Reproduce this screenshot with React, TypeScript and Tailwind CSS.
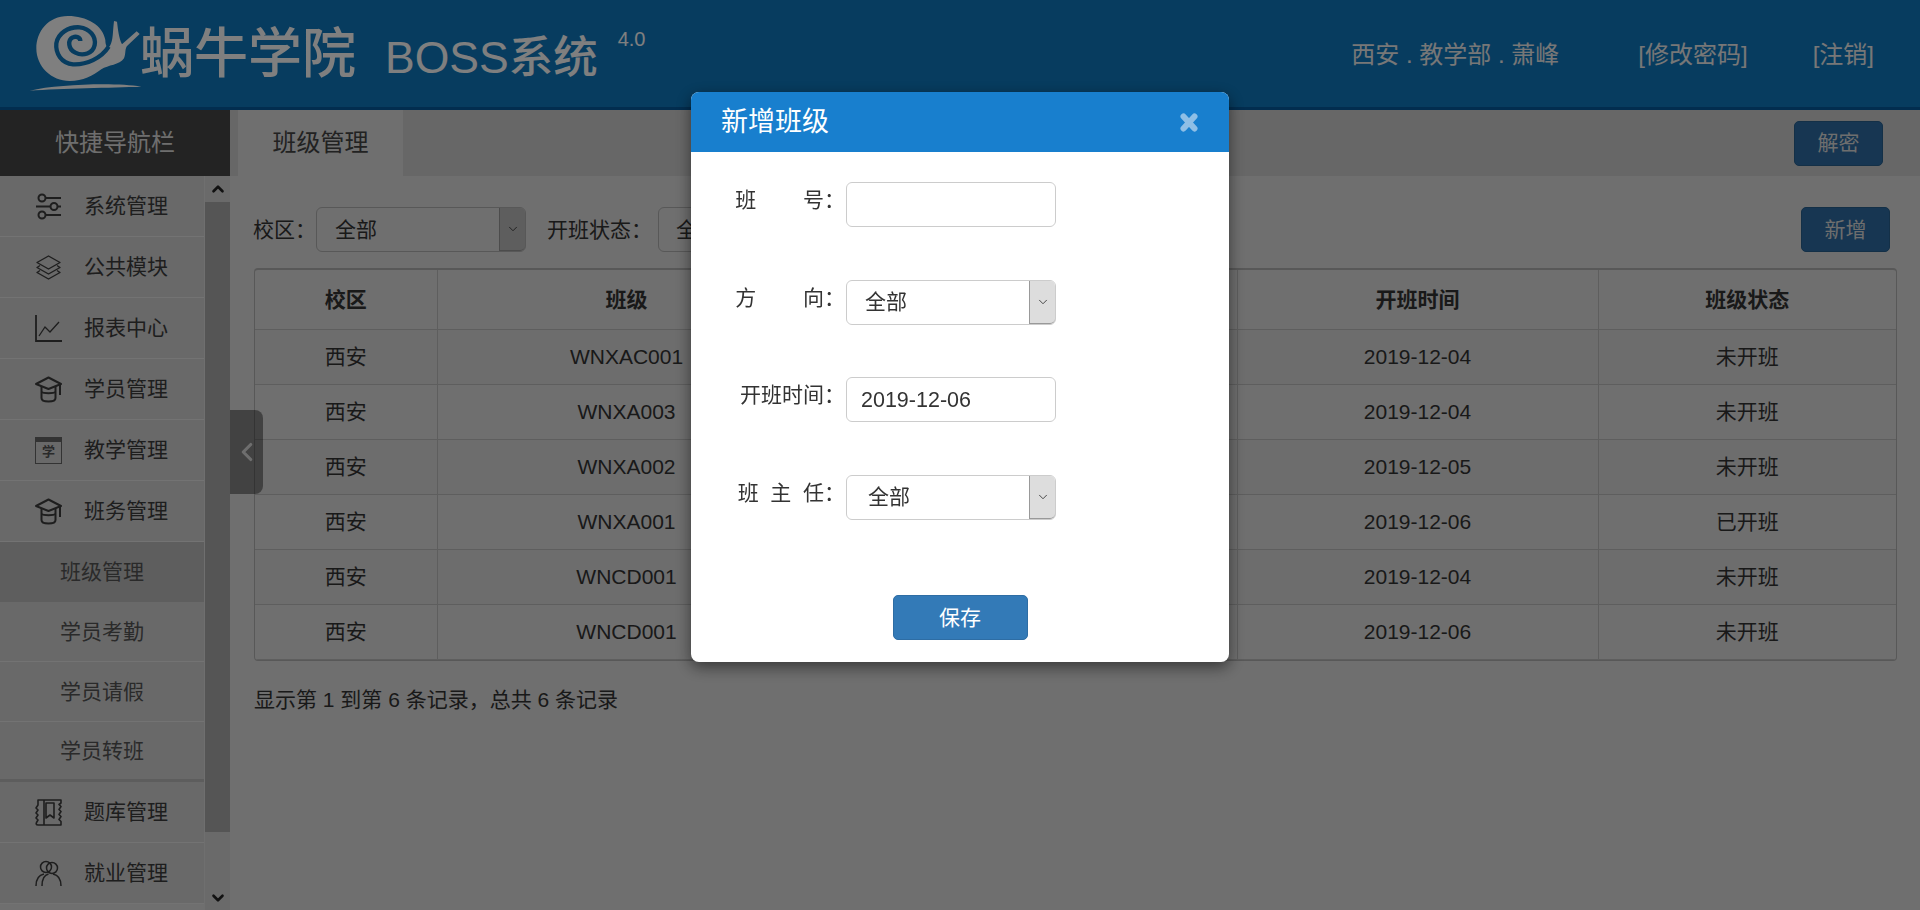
import { ChevronDown, ChevronLeft, ChevronUp } from 'lucide-react'
import type { ReactNode } from 'react'

const stack = '[font-family:"Liberation_Sans","Noto_Sans_CJK_SC",sans-serif]'

function Sliders() {
  return (
    <svg width="27" height="27" viewBox="0 0 27 27" fill="none" stroke="currentColor" strokeWidth="2">
      <path d="M11 5h15M1 13.500h15M22 13.500h4M11 22h15" />
      <circle cx="7" cy="5" r="3.500" />
      <circle cx="19" cy="13.500" r="3.500" />
      <circle cx="7" cy="22" r="3.500" />
    </svg>
  )
}

function Layers() {
  return (
    <svg width="27" height="27" viewBox="0 0 27 27" fill="none" stroke="currentColor" strokeWidth="1.400" strokeLinejoin="round">
      <path d="M13.500 2 25 8.500 13.500 15 2 8.500z" />
      <path d="M5 11.500 2 13.500 13.500 20 25 13.500 22 11.500" />
      <path d="M5 16.500 2 18.500 13.500 25 25 18.500 22 16.500" />
    </svg>
  )
}

function ChartIcon() {
  return (
    <svg width="27" height="27" viewBox="0 0 27 27" fill="none" stroke="currentColor">
      <path d="M1 0v26h26" strokeWidth="1.800" />
      <path d="M4 21 10 12l5 5 9-10" strokeWidth="1.300" />
    </svg>
  )
}

function CapIcon() {
  return (
    <svg width="27" height="27" viewBox="0 0 27 27" fill="none" stroke="currentColor" strokeWidth="2" strokeLinejoin="round">
      <path d="M13.500 1.500 26 8 13.500 13 1 8z" />
      <path d="M6.500 10v12c0 2.500 3 3.500 7 3.500s7-1 7-3.500V10" />
      <path d="M6.500 16c2 1.500 12 1.500 14 0" />
      <path d="M25 8v11" />
    </svg>
  )
}

function CalendarIcon() {
  return (
    <div className="flex h-[27px] w-[27px] flex-col border border-[#666] text-center text-[13px] font-bold leading-[20px] text-[#555]">
      <div className="h-[4px] bg-[#666]" />
      <span>学</span>
    </div>
  )
}

function BookIcon() {
  return (
    <svg width="27" height="27" viewBox="0 0 27 27" fill="none" stroke="currentColor" strokeWidth="1.600" strokeLinejoin="round">
      <path d="M3 1h23v3l-2 1.500 2 2-2 3 2 2-2 3 2 2-2 3 2 2V26H3c-2 0-2-1.500-1.500-2.500L3 21l-2-2 2-3-2-2 2-3-2-2 2-3z" />
      <path d="M9 1v25M11 4h8v15l-4-3-4 3z" />
    </svg>
  )
}

function UsersIcon() {
  return (
    <svg width="27" height="27" viewBox="0 0 27 27" fill="none" stroke="currentColor" strokeWidth="1.500">
      <circle cx="11" cy="7" r="5.500" />
      <circle cx="17" cy="8" r="5.500" />
      <path d="M1 26c0-7 3-11 8-12M26 26c0-7-3-11-8-12M7 26c0-6 2-11 6.500-12" />
    </svg>
  )
}

const NavItem = ({ icon, label }: { icon: ReactNode; label: string }) => (
  <div className="flex h-[61px] items-center border-b border-[#e6e6e6] bg-[#d2d2d2] pl-[35px] text-[#3c3c3c]">
    <span className="w-[49px] shrink-0">{icon}</span>
    <span>{label}</span>
  </div>
)

const SubItem = ({ label, active, last }: { label: string; active?: boolean; last?: boolean }) => (
  <div
    className={`flex h-[60px] items-center pl-[60px] text-[#555] ${active ? 'bg-[#bcbcbc]' : 'bg-[#d2d2d2]'} ${last ? 'border-b-[3px] border-[#bbb]' : active ? '' : 'border-b border-[#e6e6e6]'}`}
  >
    {label}
  </div>
)

const rows = [
  ['西安', 'WNXAC001', '2019-12-04', '未开班'],
  ['西安', 'WNXA003', '2019-12-04', '未开班'],
  ['西安', 'WNXA002', '2019-12-05', '未开班'],
  ['西安', 'WNXA001', '2019-12-06', '已开班'],
  ['西安', 'WNCD001', '2019-12-04', '未开班'],
  ['西安', 'WNCD001', '2019-12-06', '未开班'],
]

function SelectBox({ pad, className, arrow }: { pad: string; className: string; arrow: string }) {
  return (
    <div className={`flex h-[45px] items-center rounded-[6px] border ${className}`}>
      <span className={`flex-1 text-[#333] ${pad}`}>全部</span>
      <span className={`flex h-[43px] w-[26px] items-center justify-center rounded-r-[5px] border-b border-l border-[#999] text-[#333] ${arrow}`}>
        <ChevronDown size={14} strokeWidth={1.500} />
      </span>
    </div>
  )
}

const FormRow = ({ label, children, top }: { label: string; children: ReactNode; top: string }) => (
  <div className={`flex items-start ${top}`}>
    <label className="mr-px w-[154px] shrink-0 whitespace-pre pt-[3px] text-right leading-[30px] text-[#333]">{label}</label>
    {children}
  </div>
)

export default function App() {
  return (
    <div className={`relative h-[910px] w-full overflow-hidden bg-[#dedede] text-[21px] ${stack}`}>
      {/* 顶栏 */}
      <header className="flex h-[110px] items-start border-b-[3px] border-[#055a9e] bg-[#0e78be]">
        <svg width="124" height="100" viewBox="0 0 372 300" className="ml-[18px] mt-[5px] shrink-0">
          <path
            fill="#fff"
            d="M150 33C90 33 55 80 55 130c0 55 45 98 100 98 40 0 70-16 95-35 20-13 55-13 68-33 6-15 2-30 10-38l37-35-9-8-44 39c-9-18-12-43-15-68l-9-2c-4 32-2 57-12 74-8 13-14-2-14-17C255 60 205 33 150 33z"
          />
          <path
            fill="none"
            stroke="#0e78be"
            strokeWidth="13"
            d="M272 125c-22 35-67 55-107 53-35-3-53-33-50-63 5-30 35-50 70-48 30 3 50 28 45 53-5 25-35 35-58 23-22-11-24-38-7-46 10-5 22 1 22 11"
          />
          <path fill="#fff" d="M35 257c85-19 255-25 335-12-90 3-240 5-335 12z" />
        </svg>
        <div className="-ml-[2px] mt-[24px] flex items-baseline whitespace-nowrap font-medium text-white">
          <span className="text-[54px] leading-[60px]">蜗牛学院</span>
          <span className="ml-[29px] text-[44.500px] leading-[60px]">BOSS系统</span>
        </div>
        <sup className="ml-[20px] mt-[39px] text-[20px] leading-none text-white">4.0</sup>
        <div className="ml-auto mr-[46px] mt-[38px] flex whitespace-pre text-[24px] leading-[34px] text-[#eee]">
          <span>西安 . 教学部 . 萧峰</span>
          <span className="ml-[79px]">[修改密码]</span>
          <span className="ml-[65px]">[注销]</span>
        </div>
      </header>

      <div className="flex h-[800px]">
        {/* 侧栏 */}
        <aside className="relative w-[230px] shrink-0 overflow-hidden">
          <div className="flex h-[66px] items-center justify-center bg-[#464646] text-[24px] text-[#ddd]">快捷导航栏</div>
          <div className="flex h-[734px]">
            <nav className="w-[204px] shrink-0 overflow-hidden">
              <NavItem icon={<Sliders />} label="系统管理" />
              <NavItem icon={<Layers />} label="公共模块" />
              <NavItem icon={<ChartIcon />} label="报表中心" />
              <NavItem icon={<CapIcon />} label="学员管理" />
              <NavItem icon={<CalendarIcon />} label="教学管理" />
              <NavItem icon={<CapIcon />} label="班务管理" />
              <SubItem label="班级管理" active />
              <SubItem label="学员考勤" />
              <SubItem label="学员请假" />
              <SubItem label="学员转班" last />
              <NavItem icon={<BookIcon />} label="题库管理" />
              <NavItem icon={<UsersIcon />} label="就业管理" />
            </nav>
            <div className="ml-px flex h-full w-[25px] flex-col bg-[#d4d4d4] text-[#222]">
              <div className="flex h-[26px] shrink-0 items-center justify-center">
                <ChevronUp size={18} strokeWidth={3.500} />
              </div>
              <div className="h-[630px] shrink-0 bg-[#ababab]" />
              <div className="flex flex-1 items-end justify-center pb-[3px]">
                <ChevronDown size={18} strokeWidth={3.500} />
              </div>
            </div>
          </div>
        </aside>

        {/* 主体 */}
        <main className="min-w-0 flex-1">
          <div className="flex h-[66px] items-center bg-[#cfcfcf] pl-[8px] pr-[37px]">
            <div className="flex h-full w-[165px] items-center justify-center bg-[#dedede] text-[24px] text-[#444]">班级管理</div>
            <button className="ml-auto h-[45px] w-[89px] rounded-[5px] border border-[#28608f] bg-[#2e6da4] text-[#ddd]">解密</button>
          </div>
          <div className="pl-[24px] pr-[23px] pt-[31px]">
            <div className="flex h-[45px] items-center pr-[7px] text-[#333]">
              <span className="-ml-px w-[63px] shrink-0 whitespace-nowrap">校区：</span>
              <SelectBox pad="pl-[18px]" className="w-[210px] border-[#b0b0b0]" arrow="bg-[#bcbcbc]" />
              <span className="ml-[21px] w-[111px] shrink-0 whitespace-nowrap">开班状态：</span>
              <SelectBox pad="pl-[17px]" className="w-[210px] border-[#b0b0b0]" arrow="bg-[#bcbcbc]" />
              <button className="ml-auto h-[45px] w-[89px] rounded-[5px] border border-[#28608f] bg-[#2e6da4] text-[#ddd]">新增</button>
            </div>
            <div className="mt-[16px] overflow-hidden rounded-[4px] border border-t-2 border-[#b0b0b0]">
              <table className="w-full table-fixed border-collapse text-center text-[#333]">
                <colgroup>
                  <col className="w-[182px]" />
                  <col className="w-[379px]" />
                  <col className="w-[421px]" />
                  <col className="w-[361px]" />
                  <col />
                </colgroup>
                <thead>
                  <tr className="h-[59px] font-bold">
                    <th className="border-b border-r border-[#bcbcbc]">校区</th>
                    <th className="border-b border-r border-[#bcbcbc]">班级</th>
                    <th className="border-b border-r border-[#bcbcbc]" />
                    <th className="border-b border-r border-[#bcbcbc]">开班时间</th>
                    <th className="border-b border-[#bcbcbc]">班级状态</th>
                  </tr>
                </thead>
                <tbody>
                  {rows.map((r, i) => (
                    <tr key={i} className={`h-[55px] ${i % 2 === 0 ? 'bg-[#dadada]' : ''}`}>
                      <td className="border-b border-r border-[#bcbcbc]">{r[0]}</td>
                      <td className="border-b border-r border-[#bcbcbc]">{r[1]}</td>
                      <td className="border-b border-r border-[#bcbcbc]" />
                      <td className="border-b border-r border-[#bcbcbc]">{r[2]}</td>
                      <td className="border-b border-[#bcbcbc]">{r[3]}</td>
                    </tr>
                  ))}
                </tbody>
              </table>
            </div>
            <p className="mt-[23px] text-[#333]">显示第 1 到第 6 条记录，总共 6 条记录</p>
          </div>
        </main>
      </div>

      {/* 收起侧栏 */}
      <div className="absolute left-[230px] top-[410px] flex h-[84px] w-[33px] items-center justify-center rounded-r-[8px] bg-[#000]/40 text-[#ddd]">
        <ChevronLeft size={30} strokeWidth={2.500} />
      </div>

      {/* 遮罩 */}
      <div className="fixed inset-0 bg-black/50" />

      {/* 新增班级 */}
      <div className="fixed left-1/2 top-[92px] h-[570px] w-[538px] -translate-x-1/2 overflow-hidden rounded-[8px] bg-white shadow-[0_5px_15px_rgba(0,0,0,0.5)]">
        <div className="flex h-[60px] items-center justify-between bg-[#187fce] pl-[30px] pr-[31px] text-[27px] text-white">
          <span>新增班级</span>
          <svg width="18" height="19" viewBox="0 0 18 19" stroke="#8fbfe6" strokeWidth="6" strokeLinecap="round">
            <path d="M3.500 3.500 14.500 15.500M14.500 3.500 3.500 15.500" />
          </svg>
        </div>
        <div className="pt-[30px]">
          <FormRow label={'班\u00a0\u00a0\u00a0\u00a0\u00a0\u00a0\u00a0\u00a0号：'} top="">
            <input readOnly className="h-[45px] w-[210px] rounded-[6px] border border-[#ccc] px-[15px] outline-none" />
          </FormRow>
          <FormRow label={'方\u00a0\u00a0\u00a0\u00a0\u00a0\u00a0\u00a0\u00a0向：'} top="mt-[53px]">
            <SelectBox pad="pl-[18px] pb-[2px]" className="w-[210px] border-[#ccc]" arrow="bg-[#ddd]" />
          </FormRow>
          <FormRow label="开班时间：" top="mt-[52px]">
            <input readOnly value="2019-12-06" className="h-[45px] w-[210px] rounded-[6px] border border-[#ccc] px-[14px] pt-[2px] text-[21.500px] text-[#333] outline-none" />
          </FormRow>
          <FormRow label={'班\u00a0\u00a0主\u00a0\u00a0任：'} top="mt-[53px]">
            <SelectBox pad="pl-[21px] pb-[2px]" className="w-[210px] border-[#ccc]" arrow="bg-[#ddd]" />
          </FormRow>
          <div className="mt-[75px] flex justify-center">
            <button className="h-[45px] w-[135px] rounded-[5px] border border-[#2e6da4] bg-[#337ab7] text-white">保存</button>
          </div>
        </div>
      </div>
    </div>
  )
}
